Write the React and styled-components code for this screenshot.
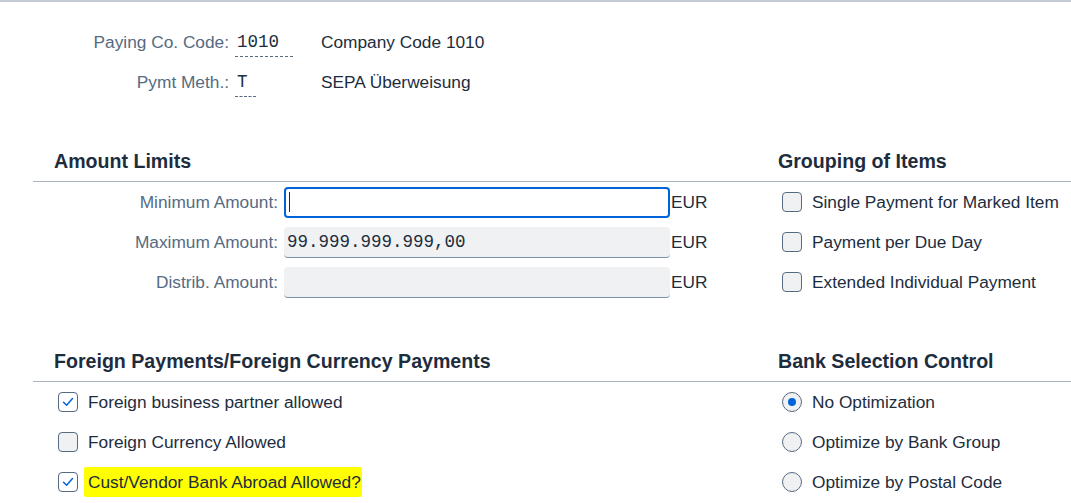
import styled, { createGlobalStyle } from 'styled-components'

const GlobalStyle = createGlobalStyle`
  body {
    margin: 0;
    background: #ffffff;
    font-family: "Liberation Sans", Arial, sans-serif;
    color: #1d2d3e;
  }
`;

const Page = styled.div`
  width: 1071px;
  min-height: 503px;
  box-sizing: border-box;
  border-top: 2px solid #c2cad3;
  padding-top: 20px;
  font-size: 17.3px;
`;

const HeaderRow = styled.div`
  display: grid;
  grid-template-columns: 229px 92px 1fr;
  height: 40px;
  align-items: center;
`;

const HeaderLabel = styled.div`
  text-align: right;
  color: #556b82;
`;

const ValueCell = styled.div`
  padding-left: 6px;
  display: flex;
  align-items: center;
`;

const KeyValue = styled.span`
  display: inline-block;
  box-sizing: border-box;
  width: ${p => p.$w}px;
  padding: 5px 2px 4px;
  font-family: "Liberation Mono", "DejaVu Sans Mono", monospace;
  font-size: 17.5px;
  line-height: 20px;
  border-bottom: 1px dashed #556b82;
`;

const Description = styled.div`
  color: #1d2d3e;
`;

const Section = styled.section`
  margin: 39px 0 0 33px;
`;

const SectionHead = styled.div`
  display: grid;
  grid-template-columns: 724px 1fr;
  height: 40px;
  align-items: center;
  border-bottom: 1px solid #a9b4be;
`;

const Heading = styled.h2`
  margin: 0;
  padding-left: 21px;
  font-size: 19.6px;
  font-weight: bold;
  color: #1d2d3e;
  white-space: nowrap;
`;

const SectionBody = styled.div`
  display: grid;
  grid-template-columns: 724px 1fr;
`;

const Column = styled.div`
  display: flex;
  flex-direction: column;
`;

const FieldRow = styled.div`
  display: grid;
  grid-template-columns: 251px 386px auto;
  height: 40px;
  align-items: center;
`;

const FieldLabel = styled.div`
  text-align: right;
  padding-right: 6px;
  color: #556b82;
`;

const Field = styled.div`
  box-sizing: border-box;
  height: 31px;
  display: flex;
  align-items: center;
  border-radius: 4px;
  padding-left: 3px;
  font-family: "Liberation Mono", "DejaVu Sans Mono", monospace;
  font-size: 17.5px;
  background: ${p => (p.$focused ? '#ffffff' : '#eff1f2')};
  border: ${p => (p.$focused ? '2px solid #0064d9' : 'none')};
  border-bottom: ${p => (p.$focused ? '2px solid #0064d9' : '1px solid #788fa6')};
`;

const Caret = styled.span`
  width: 1px;
  height: 20px;
  background: #1d2d3e;
`;

const Unit = styled.div`
  padding-left: 1px;
  color: #1d2d3e;
`;

const OptionRow = styled.div`
  display: flex;
  align-items: center;
  gap: 10px;
  height: 40px;
  padding-left: 25px;
  white-space: nowrap;
`;

const Box = styled.span`
  box-sizing: border-box;
  flex: none;
  width: 20px;
  height: 20px;
  border: 1px solid #556b82;
  border-radius: 4px;
  background: ${p => (p.$checked ? '#ffffff' : '#eff1f2')};
  display: flex;
  align-items: center;
  justify-content: center;
`;

const Radio = styled.span`
  box-sizing: border-box;
  flex: none;
  width: 20px;
  height: 20px;
  border: 1px solid #556b82;
  border-radius: 50%;
  background: #eff1f2;
  display: flex;
  align-items: center;
  justify-content: center;

  &::after {
    content: '';
    display: ${p => (p.$checked ? 'block' : 'none')};
    width: 8px;
    height: 8px;
    border-radius: 50%;
    background: #0064d9;
  }
`;

const Highlight = styled.span`
  background: #ffff00;
  padding: 5px 1px 5px 4px;
  margin-left: -4px;
  border-radius: 2px;
`;

function Checkbox({ checked, children }) {
  return (
    <OptionRow>
      <Box $checked={checked}>
        {checked && (
          <svg width="12" height="10" viewBox="0 0 12 10">
            <path d="M1.5 5.2 L4.6 8.2 L10.5 1.6" fill="none" stroke="#0064d9" strokeWidth="1.5" strokeLinecap="round" strokeLinejoin="round" />
          </svg>
        )}
      </Box>
      <span>{children}</span>
    </OptionRow>
  );
}

function RadioOption({ checked, children }) {
  return (
    <OptionRow>
      <Radio $checked={checked} />
      <span>{children}</span>
    </OptionRow>
  );
}

export default function App() {
  return (
    <Page>
      <GlobalStyle />
      <HeaderRow>
        <HeaderLabel>Paying Co. Code:</HeaderLabel>
        <ValueCell><KeyValue $w={58}>1010</KeyValue></ValueCell>
        <Description>Company Code 1010</Description>
      </HeaderRow>
      <HeaderRow>
        <HeaderLabel>Pymt Meth.:</HeaderLabel>
        <ValueCell><KeyValue $w={21}>T</KeyValue></ValueCell>
        <Description>SEPA Überweisung</Description>
      </HeaderRow>

      <Section>
        <SectionHead>
          <Heading>Amount Limits</Heading>
          <Heading>Grouping of Items</Heading>
        </SectionHead>
        <SectionBody>
          <Column>
            <FieldRow>
              <FieldLabel>Minimum Amount:</FieldLabel>
              <Field $focused><Caret /></Field>
              <Unit>EUR</Unit>
            </FieldRow>
            <FieldRow>
              <FieldLabel>Maximum Amount:</FieldLabel>
              <Field>99.999.999.999,00</Field>
              <Unit>EUR</Unit>
            </FieldRow>
            <FieldRow>
              <FieldLabel>Distrib. Amount:</FieldLabel>
              <Field />
              <Unit>EUR</Unit>
            </FieldRow>
          </Column>
          <Column>
            <Checkbox>Single Payment for Marked Item</Checkbox>
            <Checkbox>Payment per Due Day</Checkbox>
            <Checkbox>Extended Individual Payment</Checkbox>
          </Column>
        </SectionBody>
      </Section>

      <Section>
        <SectionHead>
          <Heading>Foreign Payments/Foreign Currency Payments</Heading>
          <Heading>Bank Selection Control</Heading>
        </SectionHead>
        <SectionBody>
          <Column>
            <Checkbox checked>Foreign business partner allowed</Checkbox>
            <Checkbox>Foreign Currency Allowed</Checkbox>
            <Checkbox checked><Highlight>Cust/Vendor Bank Abroad Allowed?</Highlight></Checkbox>
          </Column>
          <Column>
            <RadioOption checked>No Optimization</RadioOption>
            <RadioOption>Optimize by Bank Group</RadioOption>
            <RadioOption>Optimize by Postal Code</RadioOption>
          </Column>
        </SectionBody>
      </Section>
    </Page>
  );
}
